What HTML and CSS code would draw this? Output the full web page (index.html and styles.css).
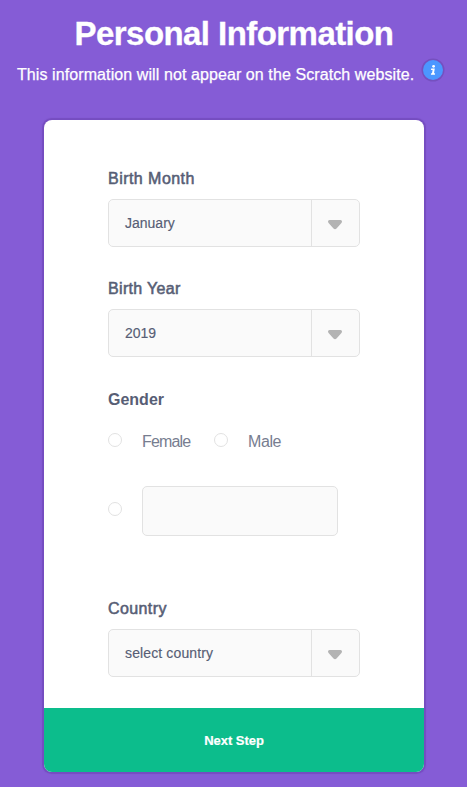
FILE: index.html
```html
<!DOCTYPE html>
<html lang="en">
<head>
<meta charset="utf-8">
<title>Personal Information</title>
<link rel="stylesheet" href="styles.css">
</head>
<body>
<header>
<h1>Personal Information</h1>
<p class="intro"><span>This information will not appear on the Scratch website.</span><svg class="info" width="24" height="24" viewBox="0 0 24 24"><circle class="ring" cx="12" cy="12" r="11.5"/><circle class="disc" cx="12" cy="12" r="10"/><circle class="mark" cx="12.6" cy="8.300" r="1.400"/><path class="mark" d="M10.200 10.500h3.600l-.8 4.800h1.100l-.2 1.500h-4l.2-1.500h.9l.6-3.400h-1.600z"/></svg></p>
</header>
<form class="card">
<div class="fields">
<label class="month">Birth Month</label>
<div class="select"><span class="value">January</span><span class="arrow"><svg width="14" height="10" viewBox="0 0 14 10"><path d="M1.500 0h11Q14 0 14 1.500 14 2.500 13 3.500L8.500 8.500Q7 10 5.500 8.500L1 3.500Q0 2.500 0 1.500 0 0 1.500 0z"/></svg></span></div>
<label class="year">Birth Year</label>
<div class="select"><span class="value">2019</span><span class="arrow"><svg width="14" height="10" viewBox="0 0 14 10"><path d="M1.500 0h11Q14 0 14 1.500 14 2.500 13 3.500L8.500 8.500Q7 10 5.500 8.500L1 3.500Q0 2.500 0 1.500 0 0 1.500 0z"/></svg></span></div>
<label class="gender">Gender</label>
<div class="options"><i class="radio"></i><span class="female">Female</span><i class="radio"></i><span class="male">Male</span></div>
<div class="other"><i class="radio"></i><input aria-label="Gender" type="text"></div>
<label class="country">Country</label>
<div class="select"><span class="value choose">select country</span><span class="arrow"><svg width="14" height="10" viewBox="0 0 14 10"><path d="M1.500 0h11Q14 0 14 1.500 14 2.500 13 3.500L8.500 8.500Q7 10 5.500 8.500L1 3.500Q0 2.500 0 1.500 0 0 1.500 0z"/></svg></span></div>
</div>
<button type="button">Next Step</button>
</form>
</body>
</html>
```
FILE: styles.css
```css
*{box-sizing:border-box}
body{margin:0;height:787px;overflow:hidden;background:#855cd6;color:#575e75;font-family:"Liberation Sans",Arial,sans-serif}
header{height:120px;color:#fff}
h1{margin:0;padding:12px 0 0 1px;height:58px;font-size:33px;letter-spacing:-.56px;line-height:44px;text-align:center;white-space:nowrap;-webkit-text-stroke:.3px #fff}
.intro{margin:0;padding-left:17px;display:flex;font-size:16px;line-height:34px;letter-spacing:.09px;-webkit-text-stroke:.25px #fff}
.intro span{width:404px;white-space:nowrap}
.info{-webkit-text-stroke:0}
.ring{fill:#7550bf}.disc{fill:#4c97ff}.mark{fill:#fff}
.card{width:380px;height:652px;margin:0 0 0 44px;background:#fff;border-radius:8px;overflow:hidden;box-shadow:0 0 1px 1.5px #754dc0}
.fields{height:588px;padding:46px 64px 0}
label{display:block;height:33px;line-height:26px;font-size:16px;-webkit-text-stroke:.55px #575e75}
.month{letter-spacing:.46px}
.year{letter-spacing:.33px}
.gender{font-weight:700;line-height:28px;-webkit-text-stroke:0}
.country{letter-spacing:.4px}
.select{width:252px;height:48px;display:flex;border:1px solid #e2e2e2;border-radius:5px;background:#fafafa;margin-bottom:29px}
.value{flex:1;padding-left:16px;font-size:14px;line-height:47px;-webkit-text-stroke:.15px #575e75}
.choose{letter-spacing:.13px}
.arrow{width:48px;border-left:1px solid #e2e2e2;display:flex;align-items:center;justify-content:center;padding:4px 1px 0 0}
.arrow svg{fill:#b3b3b3}
.options{display:flex;height:67px;padding-top:14px;font-size:16px;line-height:18px;color:#777d90}
.radio{width:14px;height:14px;border:1px solid #e2e2e2;border-radius:50%;margin-right:20px}
.female{width:72px;letter-spacing:-.85px}
.male{letter-spacing:-.4px}
.other{display:flex;height:110px}
.other .radio{margin-top:16px}
.other input{width:196px;height:50px;border:1px solid #e2e2e2;border-radius:5px;background:#fafafa}
button{display:block;width:100%;height:64px;border:0;background:#0cbd8c;color:#fff;font:700 13px "Liberation Sans",sans-serif;letter-spacing:-.03px;-webkit-text-stroke:.2px #fff}
```
